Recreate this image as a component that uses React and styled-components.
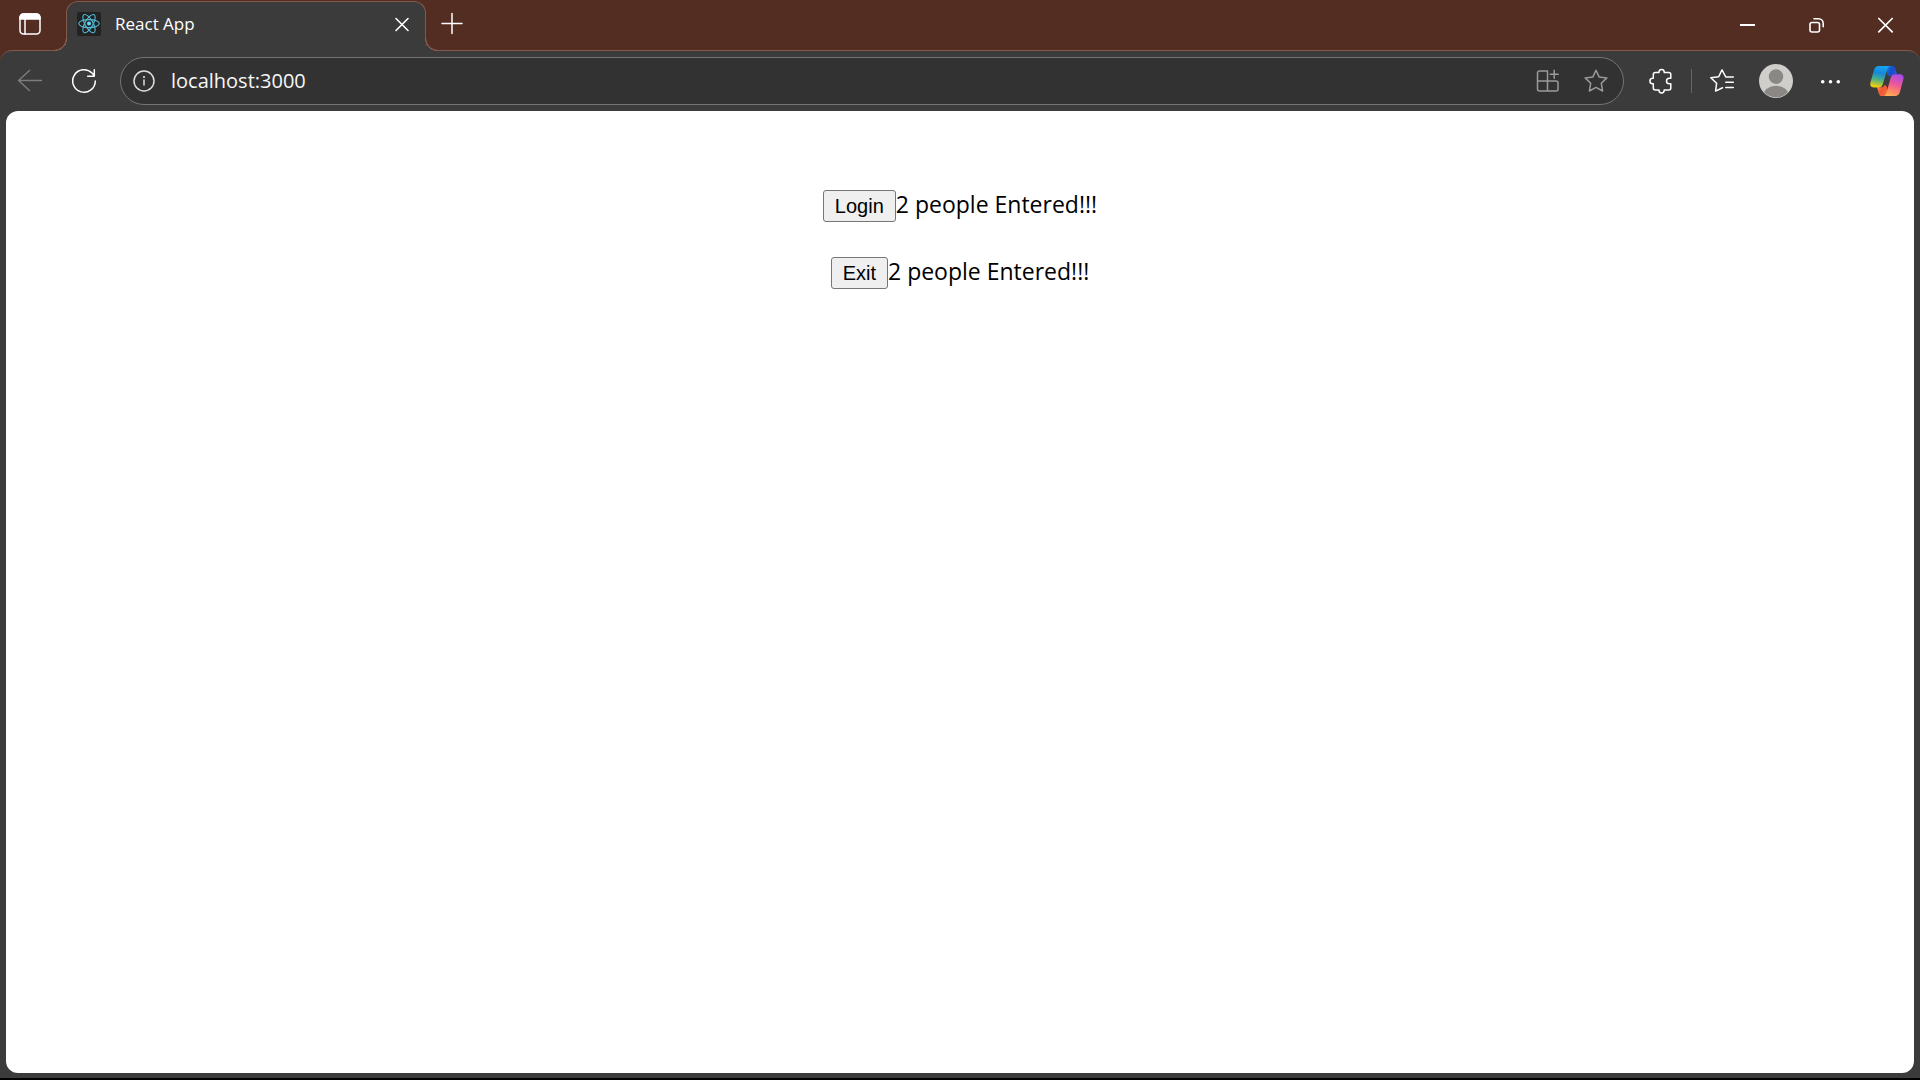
import React, { useState } from "react";
import styled, { createGlobalStyle, css } from "styled-components";

const frame = "#3b3b3b";
const strip = "#532c22";
const line = "#84594d";
const uiFont = '"Segoe UI", "Open Sans", "Noto Sans", sans-serif';

const GlobalStyle = createGlobalStyle`
  *, *::before, *::after { box-sizing: border-box; }
  html, body { margin: 0; background: #000; }
  body { font-family: ${uiFont}; }
  button, input { font: inherit; color: inherit; }
`;

const Browser = styled.div`
  display: flex;
  flex-direction: column;
  min-height: 100vh;
  background: ${strip};
  border-bottom: 2px solid #000;
`;

const TabStrip = styled.header`
  display: flex;
  height: 50px;
  color: #fff;
`;

const IconButton = styled.button`
  display: flex;
  flex: none;
  align-items: center;
  justify-content: center;
  width: ${(p) => p.$width || 48}px;
  height: 48px;
  padding: 0;
  border: 0;
  background: none;
  color: ${(p) => (p.$dim ? "#9a9a9a" : "#fff")};

  svg {
    display: block;
    overflow: visible;
  }
`;

const flare = css`
  content: "";
  position: absolute;
  bottom: 0;
  width: 12px;
  height: 12px;
`;

const Tab = styled.div`
  position: relative;
  display: flex;
  align-items: center;
  width: 360px;
  margin: 1px 0 -1px 6px;
  padding: 0 5px 5px 10px;
  border: 1px solid ${line};
  border-bottom: 0;
  border-radius: 12px 12px 0 0;
  background: ${frame};

  &::before {
    ${flare}
    right: 100%;
    background: radial-gradient(circle at 0 0, transparent 10px, ${line} 11px, ${line} 12px, ${frame} 12px);
  }

  &::after {
    ${flare}
    left: 100%;
    background: radial-gradient(circle at 100% 0, transparent 10px, ${line} 11px, ${line} 12px, ${frame} 12px);
  }
`;

const TabTitle = styled.span`
  flex: 1;
  margin-left: 14px;
  font-size: 17px;
  line-height: 24px;
`;

const TabClose = styled(IconButton)`
  width: 36px;
  height: 24px;
`;

const WindowControls = styled.div`
  display: flex;
  margin-left: auto;
`;

const Body = styled.div`
  display: flex;
  flex: 1;
  flex-direction: column;
  border-top: 1px solid ${line};
  border-radius: 12px 12px 0 0;
  background: ${frame};
`;

const Toolbar = styled.nav`
  display: flex;
  align-items: center;
  gap: 6px;
  height: 60px;
  padding: 0 9px 0 6px;
`;

const AddressBar = styled.form`
  display: flex;
  flex: 1;
  align-items: center;
  height: 48px;
  margin: 0 7px 0 6px;
  padding: 0 3px 0 5px;
  border: 1px solid #747474;
  border-radius: 24px;
  background: #323232;
`;

const AddressInput = styled.input`
  flex: 1;
  min-width: 0;
  padding: 0 9px;
  border: 0;
  outline: 0;
  background: none;
  color: #f7f7f7;
  font-size: 20px;
  line-height: 28px;
`;

const Divider = styled.span`
  width: 1px;
  height: 24px;
  background: #666;
`;

const CopilotButton = styled(IconButton)`
  margin-left: 3px;
`;

const Page = styled.main`
  display: flex;
  flex: 1;
  flex-direction: column;
  align-items: center;
  gap: 35px;
  margin: 0 6px 5px;
  padding: 77px 0;
  border-radius: 12px;
  background: #fff;
  color: #000;
`;

const CounterRow = styled.div`
  display: flex;
  align-items: baseline;
  height: 32px;
  font-size: 23px;
  line-height: 32px;
`;

const CounterButton = styled.button`
  height: 32px;
  padding: 0 11px;
  border: 1px solid #767676;
  border-radius: 3px;
  background: #efefef;
  font-family: Arial, "Liberation Sans", sans-serif;
  font-size: 20px;
  line-height: 30px;
`;

function Icon({ size = 24, stroke = 1.5, children }) {
  return (
    <svg
      width={size}
      height={size}
      viewBox={`0 0 ${size} ${size}`}
      fill="none"
      stroke="currentColor"
      strokeWidth={stroke}
      strokeLinecap="round"
      strokeLinejoin="round"
      aria-hidden="true"
    >
      {children}
    </svg>
  );
}

function ReactLogo() {
  return (
    <svg width="24" height="24" viewBox="0 0 24 24" aria-hidden="true">
      <rect width="24" height="24" rx="2" fill="#222" />
      <g fill="none" stroke="#53b9d4" strokeWidth="1.1">
        <ellipse cx="12" cy="11.6" rx="10.3" ry="4" />
        <ellipse cx="12" cy="11.6" rx="10.3" ry="4" transform="rotate(60 12 11.6)" />
        <ellipse cx="12" cy="11.6" rx="10.3" ry="4" transform="rotate(120 12 11.6)" />
      </g>
      <circle cx="12" cy="11.6" r="2" fill="#61dafb" />
    </svg>
  );
}

function Avatar() {
  return (
    <svg width="34" height="34" viewBox="0 0 34 34" aria-hidden="true">
      <defs>
        <clipPath id="avatar-clip">
          <circle cx="17" cy="17" r="16.3" />
        </clipPath>
      </defs>
      <circle cx="17" cy="17" r="17" fill="#d0cecb" />
      <g clipPath="url(#avatar-clip)" fill="#8a8785">
        <circle cx="17" cy="12.6" r="7.3" />
        <ellipse cx="17" cy="31" rx="12.5" ry="9.2" />
      </g>
    </svg>
  );
}

function CopilotLogo() {
  return (
    <svg width="34" height="30" viewBox="0 0 34 30" aria-hidden="true">
      <defs>
        <linearGradient id="cp-left" x1="0.6" y1="0" x2="0.4" y2="1">
          <stop offset="0" stopColor="#16a5f2" />
          <stop offset="0.35" stopColor="#1688dc" />
          <stop offset="0.65" stopColor="#4bb184" />
          <stop offset="1" stopColor="#f5cf0a" />
        </linearGradient>
        <linearGradient id="cp-top" x1="0" y1="0" x2="1" y2="0.5">
          <stop offset="0" stopColor="#1689e4" />
          <stop offset="0.55" stopColor="#164fc9" />
          <stop offset="1" stopColor="#2456df" />
        </linearGradient>
        <linearGradient id="cp-right" x1="0.65" y1="0" x2="0.35" y2="1">
          <stop offset="0" stopColor="#a84be6" />
          <stop offset="0.45" stopColor="#ee579a" />
          <stop offset="0.75" stopColor="#ff8565" />
          <stop offset="1" stopColor="#ffad57" />
        </linearGradient>
        <linearGradient id="cp-bottom" x1="0" y1="0" x2="1" y2="0.7">
          <stop offset="0" stopColor="#ffa051" />
          <stop offset="0.5" stopColor="#f25534" />
          <stop offset="1" stopColor="#f0703e" />
        </linearGradient>
      </defs>
      <path d="M16 0h6.300c1.800 0 2.600.9 3.200 2.700L27.100 8.200h-3.500c-2 0-3 .9-3.700 2.700L17.500 9z" fill="url(#cp-top)" />
      <path d="M18 30h-6.200c-1.600 0-2.500-.9-3-2.600L7 21.300h4c2 0 3.100-.9 3.600-2.800L17 21z" fill="url(#cp-bottom)" />
      <path d="M9 0h11.800c-2.200 0-3 1.400-3.600 3.400l-4.300 14.700c-.6 2-1.700 3.300-4 3.300H4c-3.300 0-4.300-2.300-3.500-5.200L4 4C4.800 1.400 6.300 0 9 0z" fill="url(#cp-left)" />
      <path d="M24.600 8.200h5c3.400 0 4.500 2.500 3.700 5.300L30 25.700C29.100 28.600 27.600 30 24.800 30H12.800c2 0 3-1.100 3.600-3.100l4.400-15.400c.6-2.100 1.800-3.300 3.800-3.300z" fill="url(#cp-right)" />
    </svg>
  );
}

export default function App() {
  const [count, setCount] = useState(2);

  return (
    <>
      <GlobalStyle />
      <Browser>
        <TabStrip>
          <IconButton $width={60} aria-label="Tab actions">
            <Icon>
              <rect x="2" y="2" width="20" height="20" rx="3.500" />
              <path d="M2 7V5.500A3.500 3.500 0 0 1 5.500 2h13A3.500 3.500 0 0 1 22 5.500V7z" fill="currentColor" />
              <path d="M7 7v15" />
            </Icon>
          </IconButton>
          <Tab>
            <ReactLogo />
            <TabTitle>React App</TabTitle>
            <TabClose aria-label="Close tab">
              <Icon size={14} stroke={1.6}>
                <path d="M1 1.500l12 12M13 1.500l-12 12" />
              </Icon>
            </TabClose>
          </Tab>
          <IconButton $width={52} aria-label="New tab">
            <Icon size={22}>
              <path d="M11 .5v20M1 10.500h20" />
            </Icon>
          </IconButton>
          <WindowControls>
            <IconButton $width={69} aria-label="Minimize">
              <Icon size={15} stroke={2}>
                <path d="M0 8h15" strokeLinecap="butt" />
              </Icon>
            </IconButton>
            <IconButton $width={69} aria-label="Restore">
              <Icon size={15} stroke={1.6}>
                <rect x="1" y="5.500" width="9.500" height="9.500" rx="2" />
                <path d="M5 1.700h4.500A4.700 4.700 0 0 1 14.200 6.400V9.700" />
              </Icon>
            </IconButton>
            <IconButton $width={69} aria-label="Close">
              <Icon size={15} stroke={1.7}>
                <path d="M.8 1.500l13.400 13.400M14.200 1.500L.8 14.900" />
              </Icon>
            </IconButton>
          </WindowControls>
        </TabStrip>

        <Body>
          <Toolbar>
            <IconButton $dim aria-label="Back">
              <Icon stroke={1.4}>
                <path d="M23.500 11.500H.5M11.500 1.500l-11 10 11 10" stroke="#7d7d7d" />
              </Icon>
            </IconButton>
            <IconButton aria-label="Refresh">
              <Icon>
                <path d="M23.300 12A11.300 11.300 0 1 1 20 4l2.200 2.400M22.300.8v6.400h-6.600" />
              </Icon>
            </IconButton>
            <AddressBar onSubmit={(e) => e.preventDefault()}>
              <IconButton $width={36} type="button" aria-label="Site information">
                <Icon size={22}>
                  <g stroke="#dedede">
                    <circle cx="11" cy="11" r="10" />
                    <path d="M11 10v5" />
                  </g>
                  <circle cx="11" cy="7" r="1.100" fill="#dedede" stroke="none" />
                </Icon>
              </IconButton>
              <AddressInput aria-label="Address" defaultValue="localhost:3000" spellCheck={false} />
              <IconButton $dim type="button" aria-label="Install app">
                <Icon>
                  <path d="M1.500 12V4a2 2 0 0 1 2-2H11.500v10zM1.500 12V20a2 2 0 0 0 2 2H11.500V12zM11.500 12H20a2 2 0 0 1 2 2V20a2 2 0 0 1-2 2h-8.500M18.200 1.200v8M14.200 5.200h8" />
                </Icon>
              </IconButton>
              <IconButton $dim type="button" aria-label="Add to favorites">
                <Icon>
                  <path d="M12 1.200l3.100 6.700 7.800 1-5.600 5.300 1.300 7.800L12 18.400l-6.600 3.600 1.300-7.800L1.100 8.900l7.800-1z" />
                </Icon>
              </IconButton>
            </AddressBar>
            <IconButton aria-label="Extensions">
              <Icon>
                <path d="M10 3.400v-.3a2.600 2.600 0 0 1 5.200 0v.3h4.600a2 2 0 0 1 2 2v3.800h-1.500a2.800 2.800 0 0 0 0 5.600h1.500v4.300a2 2 0 0 1-2 2h-4.600v.2a2.600 2.600 0 0 1-5.200 0v-.2H6.300a2 2 0 0 1-2-2v-4.300H3.700a2.800 2.800 0 0 1 0-5.600h.6V5.400a2 2 0 0 1 2-2z" />
              </Icon>
            </IconButton>
            <Divider />
            <IconButton aria-label="Favorites">
              <Icon>
                <path d="M23.300 8h-7.500L12 .8 8.700 7.800l-7.900 1 5.800 5.500-1 7.800 6.900-3.300M15.800 13.300h7.500M15.800 18.500h7.500" />
              </Icon>
            </IconButton>
            <IconButton aria-label="Profile">
              <Avatar />
            </IconButton>
            <IconButton aria-label="Settings and more">
              <Icon>
                <g fill="currentColor" stroke="none">
                  <circle cx="4.700" cy="12.700" r="1.800" />
                  <circle cx="12.500" cy="12.700" r="1.800" />
                  <circle cx="20.300" cy="12.700" r="1.800" />
                </g>
              </Icon>
            </IconButton>
            <CopilotButton aria-label="Copilot">
              <CopilotLogo />
            </CopilotButton>
          </Toolbar>

          <Page>
            <CounterRow>
              <CounterButton onClick={() => setCount(count + 1)}>Login</CounterButton>
              <span>{count} people Entered!!!</span>
            </CounterRow>
            <CounterRow>
              <CounterButton onClick={() => setCount(count - 1)}>Exit</CounterButton>
              <span>{count} people Entered!!!</span>
            </CounterRow>
          </Page>
        </Body>
      </Browser>
    </>
  );
}
